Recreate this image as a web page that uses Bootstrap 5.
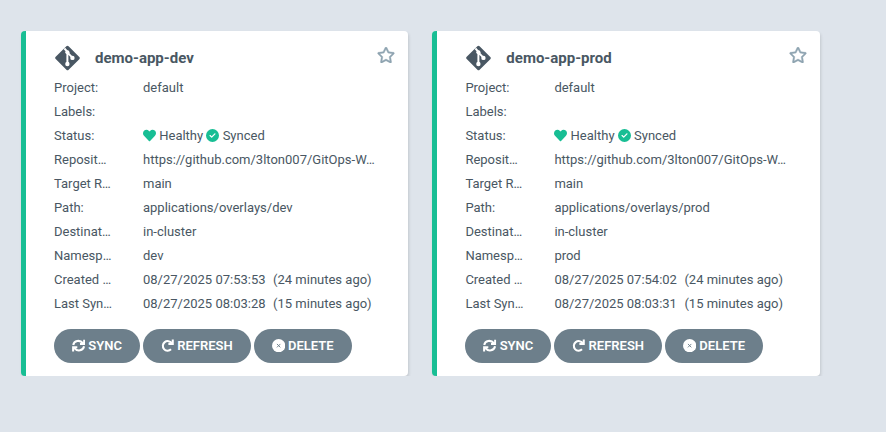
<!DOCTYPE html>
<html lang="en">
<head>
<meta charset="utf-8">
<meta name="viewport" content="width=device-width, initial-scale=1">
<title>Applications</title>
<link href="https://cdn.jsdelivr.net/npm/bootstrap@5.3.0/dist/css/bootstrap.min.css" rel="stylesheet">
<style>
body{background:#dee4eb;font-family:Roboto,"Liberation Sans",sans-serif;font-size:13px;line-height:24px;color:#495763;overflow:hidden}
.tiles{padding:31px 66px 0 20.8px;gap:24px}
.tile{width:387.4px;height:345px;border-left:5px solid #18be94;border-radius:4px;box-shadow:1px 2px 3px rgba(0,0,0,.12);padding:11px 12px 0 28.2px}
.tile-head{height:34px;padding-bottom:2px}
.tile-name{font-size:15px;font-weight:700;margin-left:15.3px}
.star-icon{width:18px;height:16px;margin:-7px 1px 0 0;color:#8fa4b1}
.git-icon{width:25px;height:28px;margin-left:.7px}
.field-name{width:59px;margin-right:30px;flex:none}
.ago{margin-left:7.5px}
.ok{color:#18be94}
.tile svg{fill:currentColor;flex:none}
.status-icon{width:13px;height:13px;vertical-align:-2px}
.tile-actions{margin-top:13px;gap:3px}
.action{height:34px;border-radius:17px;background:#6d7f8b;color:#fff;font-size:13px;font-weight:600;line-height:34px;padding:0 18px;border:0;white-space:nowrap}
.action:hover{background:#5d6f7b;color:#fff}
.action svg{width:13.3px;height:13.3px;margin:-1px 3px 0 0}
.action .arc{fill:none;stroke:currentColor;stroke-width:2}
</style>
<script src="https://cdn.jsdelivr.net/npm/bootstrap@5.3.0/dist/js/bootstrap.bundle.min.js"></script>
</head>
<body>
<svg class="d-none" aria-hidden="true">
<symbol id="git" viewBox="0 0 448 512"><path d="M439.55 236.05L244 40.45a28.87 28.87 0 0 0-40.81 0L8.45 235.14a28.86 28.86 0 0 0 0 40.81l195.61 195.6a28.86 28.86 0 0 0 40.8 0l194.69-194.69a28.86 28.86 0 0 0 0-40.81z"/><path d="M168 82L222 142V366M222 152L312 250" fill="none" stroke="#fff" stroke-width="36"/><g fill="#fff"><circle cx="222" cy="150" r="38"/><circle cx="222" cy="366" r="40"/><circle cx="314" cy="254" r="40"/></g></symbol>
<symbol id="star" viewBox="0 0 576 512"><path stroke="currentColor" stroke-width="12" d="M528.1 171.5L382 150.2 316.7 17.8c-11.7-23.6-45.6-23.9-57.4 0L194 150.2 47.9 171.5c-26.2 3.8-36.7 36.1-17.7 54.6l105.7 103-25 145.5c-4.5 26.3 23.2 46 46.4 33.7L288 439.6l130.7 68.7c23.2 12.2 50.9-7.4 46.4-33.7l-25-145.5 105.7-103c19-18.5 8.5-50.8-17.7-54.6zM388.6 312.3l23.7 138.4L288 385.4l-124.3 65.3 23.7-138.4-100.6-98 139-20.2 62.2-126 62.2 126 139 20.2-100.6 98z"/></symbol>
<symbol id="heart" viewBox="0 0 512 512"><path d="M462.3 62.6C407.5 15.9 326 24.3 275.7 76.2L256 96.5l-19.7-20.3C186.1 24.3 104.5 15.9 49.7 62.6c-62.8 53.6-66.1 149.8-9.9 207.9l193.5 199.8c12.5 12.9 32.8 12.9 45.3 0l193.5-199.8c56.3-58.1 53-154.3-9.8-207.9z"/></symbol>
<symbol id="check" viewBox="0 0 512 512"><path d="M256 512A256 256 0 1 0 256 0a256 256 0 1 0 0 512zM369 209L241 337c-9.4 9.4-24.6 9.4-33.9 0l-64-64c-9.4-9.4-9.4-24.6 0-33.9s24.6-9.4 33.9 0l47 47L335 175c9.4-9.4 24.6-9.4 33.9 0s9.4 24.6 0 33.9z"/></symbol>
<symbol id="cross" viewBox="0 0 512 512"><circle cx="256" cy="256" r="256"/><path d="M190 190L322 322M322 190L190 322" stroke="#6d7f8b" stroke-width="36"/></symbol>
<symbol id="sync" viewBox="0 0 13 13"><path d="M1.2 5.9C2 1.6 7.6 .3 10.7 4.1M11.9.8V4.9H7.8M11.8 7.1C11 11.4 5.4 12.7 2.3 8.9M1.1 12.2V8.1H5.2"/></symbol>
<symbol id="redo" viewBox="0 0 13 13"><path d="M10.4 4.1A4.7 4.7 0 1 0 9.8 10.1M11.5.6V4.9H7.2"/></symbol>
</svg>
<main class="d-flex tiles" id="tiles"></main>
<script>
const apps = [
  {env: 'dev', created: '07:53:53', synced: '08:03:28'},
  {env: 'prod', created: '07:54:02', synced: '08:03:31'}
];
const field = (name, value) => `<div class="d-flex text-nowrap"><div class="field-name">${name}</div><div>${value}</div></div>`;
document.getElementById('tiles').innerHTML = apps.map(a => `
<article class="tile bg-white flex-shrink-0">
  <header class="tile-head d-flex align-items-center">
    <svg class="git-icon"><use href="#git"/></svg>
    <span class="tile-name">demo-app-${a.env}</span>
    <svg class="star-icon ms-auto"><use href="#star"/></svg>
  </header>
  ${field('Project:', 'default')}
  ${field('Labels:', '&nbsp;')}
  ${field('Status:', '<svg class="status-icon ok"><use href="#heart"/></svg> Healthy <svg class="status-icon ok"><use href="#check"/></svg> Synced')}
  ${field('Reposit…', 'https://github.com/3lton007/GitOps-W…')}
  ${field('Target R…', 'main')}
  ${field('Path:', 'applications/overlays/' + a.env)}
  ${field('Destinat…', 'in-cluster')}
  ${field('Namesp…', a.env)}
  ${field('Created …', `08/27/2025 ${a.created}<span class="ago">(24 minutes ago)</span>`)}
  ${field('Last Syn…', `08/27/2025 ${a.synced}<span class="ago">(15 minutes ago)</span>`)}
  <div class="tile-actions d-flex">
    <button class="btn action d-flex align-items-center"><svg class="arc"><use href="#sync"/></svg>SYNC</button>
    <button class="btn action d-flex align-items-center"><svg class="arc"><use href="#redo"/></svg>REFRESH</button>
    <button class="btn action d-flex align-items-center"><svg><use href="#cross"/></svg>DELETE</button>
  </div>
</article>`).join('');
</script>
</body>
</html>
